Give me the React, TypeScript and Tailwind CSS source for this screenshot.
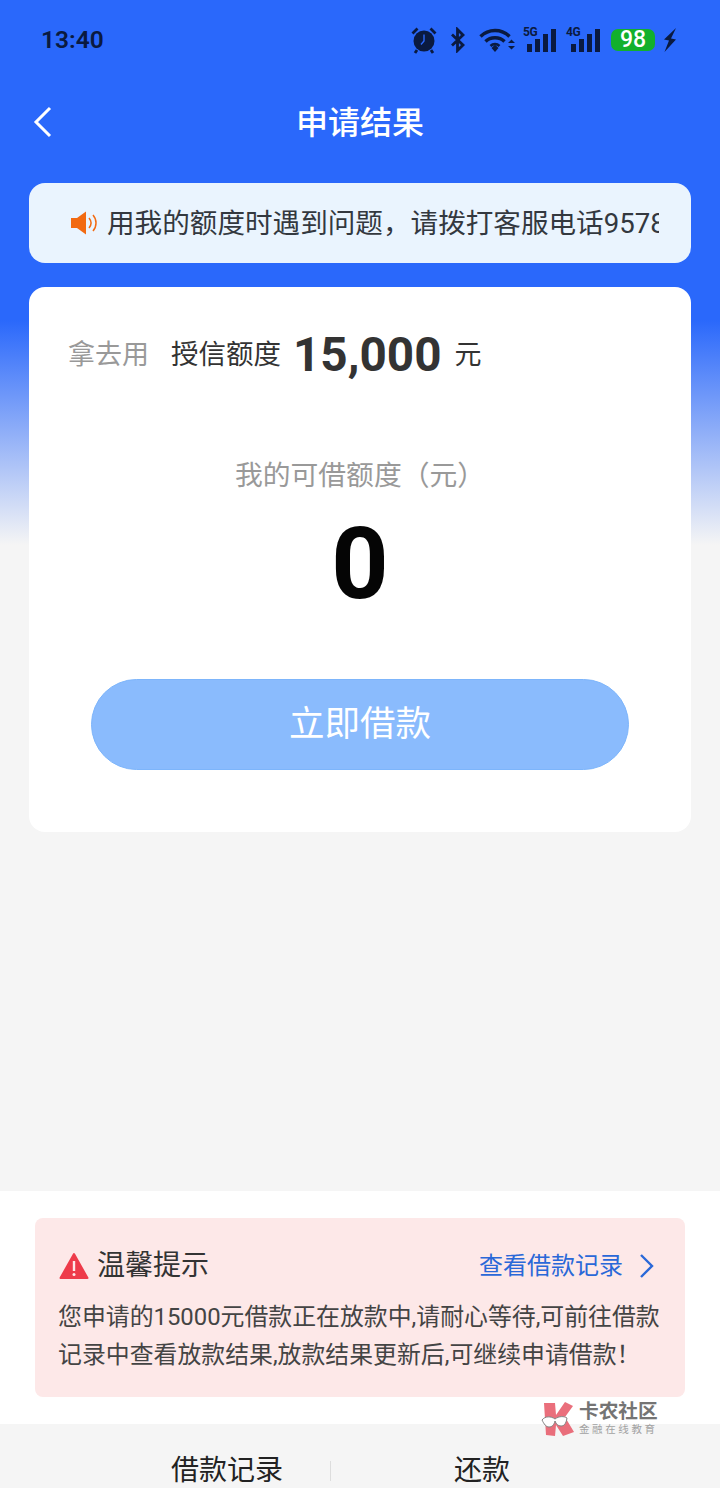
import React from 'react';

const cjk = "font-['Roboto','Noto_Sans_CJK_SC',sans-serif]";

const Signal = ({ label, className }: { label: string; className: string }) => {
  return (
    <div className={`relative h-[24px] ${className}`}>
      <span className="absolute top-[-3px] left-0 font-['Roboto',sans-serif] text-[12px] leading-[14px] font-bold tracking-[-0.5px] text-[#0a1a40]">
        {label}
      </span>
      <div className="absolute right-0 bottom-0 flex items-end gap-[3px]">
        <div className="h-[8px] w-[5px] bg-[#0a1a40]" />
        <div className="h-[13px] w-[5px] bg-[#0a1a40]" />
        <div className="h-[18px] w-[5px] bg-[#0a1a40]" />
        <div className="h-[23px] w-[5px] bg-[#0a1a40]" />
      </div>
    </div>
  );
};

const StatusIcons = () => {
  return (
    <div className="flex items-center">
      {/* alarm */}
      <svg width="28" height="28" viewBox="0 0 28 28">
        <circle cx="14" cy="15" r="10.500" fill="#0a1a40" />
        <path d="M14 8.500V15l-3 3.500" stroke="#2a68fb" strokeWidth="1.400" fill="none" />
        <path d="M2.500 7.500 7.500 2.500M25.500 7.500l-5-5M7 24l-2 3M21 24l2 3" stroke="#0a1a40" strokeWidth="2.800" fill="none" />
      </svg>
      {/* bluetooth */}
      <svg width="16" height="26" viewBox="0 0 16 26" className="ml-[12px]">
        <path d="M2 7.500 13 18l-5.500 5.500V2.500L13 8 2 18.500" stroke="#0a1a40" strokeWidth="2.800" fill="none" />
      </svg>
      {/* wifi */}
      <svg width="36" height="26" viewBox="0 0 36 26" className="ml-[13px]">
        <path d="M1.500 9.500C9.500 1.500 22.500 1.500 30.500 9.500" stroke="#0a1a40" strokeWidth="3.400" fill="none" />
        <path d="M6.500 14.500C11.500 9.500 20.500 9.500 25.500 14.500" stroke="#0a1a40" strokeWidth="3.400" fill="none" />
        <path d="M11.500 19C14 16.500 18 16.500 20.500 19" stroke="#0a1a40" strokeWidth="2.600" fill="none" />
        <path d="M12.500 21 16 17.800 19.500 21 16 25z" fill="#0a1a40" />
        <path d="M29 16h7l-3.500-3.500zM29 19h7l-3.500 3.500z" fill="#0a1a40" />
      </svg>
      <Signal label="5G" className="ml-[8px] w-[33px]" />
      <Signal label="4G" className="ml-[10px] w-[34px]" />
      {/* battery */}
      <div className="ml-[11px] flex h-[22px] w-[44px] items-center justify-center rounded-[7px] bg-[#12b02c] font-['Roboto',sans-serif] text-[23px] font-medium text-white">
        98
      </div>
      {/* charging */}
      <svg width="16" height="26" viewBox="0 0 16 26" className="ml-[7px]">
        <path d="M14 1 2 12.500l5 1-4.500 11.500L14 12.500l-5-1z" fill="#0a1a40" />
      </svg>
    </div>
  );
};

const App = () => {
  return (
    <div className={`relative flex h-[1488px] w-[720px] flex-col overflow-hidden bg-[linear-gradient(to_bottom,#2a68fb_0,#2a68fb_320px,#f5f5f5_545px)] ${cjk}`}>
      {/* status bar */}
      <div className="flex h-[80px] shrink-0 items-center justify-between pr-[42px] pl-[41px]">
        <span className="font-['Roboto',sans-serif] text-[24.500px] font-semibold text-[#0a1a40]">13:40</span>
        <StatusIcons />
      </div>

      {/* title */}
      <div className="relative flex h-[84px] shrink-0 items-center justify-center">
        <svg width="20" height="32" viewBox="0 0 20 32" className="absolute top-[26px] left-[33px]">
          <path d="M17 2 3 16l14 14" stroke="#fff" strokeWidth="3" fill="none" />
        </svg>
        <h1 className="pt-[1px] text-[32px] font-medium text-white">申请结果</h1>
      </div>

      {/* notice */}
      <div className="mx-[29px] mt-[19px] flex h-[80px] shrink-0 items-center rounded-[16px] bg-[#eaf4fe] pl-[41px]">
        <svg width="30" height="26" viewBox="0 0 30 26" className="mr-[7px] shrink-0">
          <path d="M1 8h6l9-6.500v23L7 18H1z" fill="#f26a12" />
          <path d="M19 8c2.500 3 2.500 7 0 10M23 5c4 4.500 4 11.500 0 16" stroke="#f26a12" strokeWidth="1.500" fill="none" />
        </svg>
        <div className="w-[552px] overflow-hidden pt-[2px] text-[27.600px] whitespace-nowrap text-[#33383f]">
          用我的额度时遇到问题，请拨打客服电话95788
        </div>
      </div>

      {/* card */}
      <div className="mx-[29px] mt-[24px] flex h-[545px] shrink-0 flex-col rounded-[16px] bg-white">
        <div className="mt-[39px] flex items-center pl-[39px]">
          <span className="text-[27px] text-[#999]">拿去用</span>
          <span className="ml-[22px] text-[27.500px] text-[#333]">授信额度</span>
          <span className="ml-[12px] font-['Roboto',sans-serif] text-[47.700px] leading-[58px] font-bold text-[#333]">15,000</span>
          <span className="ml-[13px] text-[27px] text-[#333]">元</span>
        </div>
        <div className="mt-[72px] text-center text-[27.800px] leading-[40px] text-[#999]">我的可借额度（元）</div>
        <div className="mt-[20px] text-center font-['Roboto',sans-serif] text-[100px] leading-[96px] font-bold text-[#050505]">0</div>
        <div className="mx-[62px] mt-[67px] flex h-[91px] items-center justify-center rounded-full border border-[#7db5fb] bg-[#8abbfd] text-[35.500px] font-normal text-white">
          立即借款
        </div>
      </div>

      {/* tips */}
      <div className="mt-[359px] flex h-[233px] shrink-0 flex-col bg-white px-[35px] pt-[27px]">
        <div className="h-[179px] rounded-[8px] bg-[#fde8e8] pt-[28px] pr-[24px] pl-[23px]">
          <div className="flex h-[40px] items-center">
            <svg width="30" height="28" viewBox="0 0 30 28" className="ml-[1px] shrink-0">
              <path d="M15 2 28.500 26H1.500z" fill="#ee3b4a" stroke="#ee3b4a" strokeWidth="2" strokeLinejoin="round" />
              <path d="M15 9v10" stroke="#fde8e8" strokeWidth="2.400" />
              <circle cx="15" cy="22.500" r="1.500" fill="#fde8e8" />
            </svg>
            <span className="ml-[8px] text-[28px] text-[#333]">温馨提示</span>
            <span className="ml-auto text-[24px] text-[#2a68d8]">查看借款记录</span>
            <svg width="16" height="26" viewBox="0 0 16 26" className="mr-[6px] ml-[16px]">
              <path d="M2 2l11 11L2 24" stroke="#2a68d8" strokeWidth="2.400" fill="none" />
            </svg>
          </div>
          <p className="mt-[12px] text-[23.880px] leading-[38px] whitespace-nowrap text-[#444]">
            您申请的15000元借款正在放款中,请耐心等待,可前往借款
            <br />
            记录中查看放款结果,放款结果更新后,可继续申请借款！
          </p>
        </div>
      </div>

      {/* bottom tabs */}
      <div className="flex h-[64px] shrink-0 items-start bg-[#f5f5f5] pt-[27px] text-[28px] leading-[40px] whitespace-nowrap text-[#222]">
        <span className="ml-[171px]">借款记录</span>
        <div className="mt-[10px] ml-[47px] h-[20px] w-px bg-[#ddd]" />
        <span className="ml-[123px]">还款</span>
      </div>

      {/* watermark */}
      <div className="absolute top-[1401px] left-[541px] flex items-center opacity-90">
        <svg width="34" height="36" viewBox="0 0 34 36">
          <path d="M3 2h11l1 12L24 1l8 4-8 11 9 15-11 4-7-11-1 11-9-1z" fill="#e8606e" />
          <path d="M1 19c3-4 9-4 13-1 4-3 9-3 12-1-1 6-3 8-6 8-3 0-5-2-6-5-1 4-3 6-6 6-3 0-5-3-7-7z" fill="#fff" stroke="#777" strokeWidth="1" />
        </svg>
        <div className="ml-[4px] flex flex-col items-start">
          <span className="text-[19.700px] leading-[22px] font-bold text-[#666]">卡农社区</span>
          <span className="text-[10.500px] leading-[14px] tracking-[2.600px] text-[#999]">金融在线教育</span>
        </div>
      </div>
    </div>
  );
};

export default App;
